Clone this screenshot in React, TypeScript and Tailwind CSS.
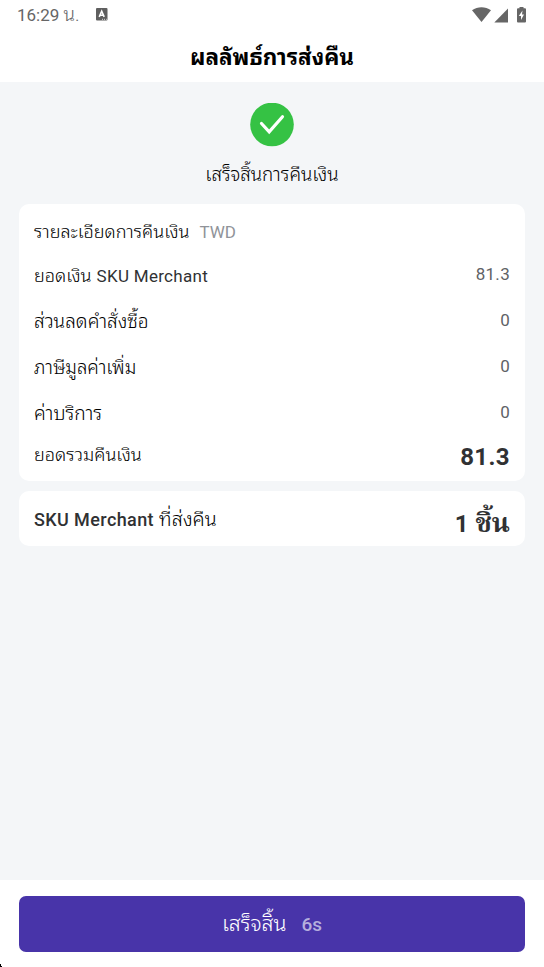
const rows = [
  { label: "ยอดเงิน", suffix: "SKU Merchant", value: "81.3", size: "text-[18.1px]" },
  { label: "ส่วนลดคำสั่งซื้อ", suffix: "", value: "0", size: "text-[19.1px]" },
  { label: "ภาษีมูลค่าเพิ่ม", suffix: "", value: "0", size: "text-[18.7px]" },
  { label: "ค่าบริการ", suffix: "", value: "0", size: "text-[19.1px]" },
];

function StatusBar() {
  return (
    <div className="flex h-8 items-center justify-between px-[17px] text-[#666666]">
      <div className="flex items-center">
        <span className="h-8 text-[17px] leading-[30px]">
          16:29 <span className="text-[19px] font-light">น.</span>
        </span>
        <svg className="mb-[3px] ml-4 h-[13px] w-[12px]" viewBox="0 0 12 13">
          <rect width="11.5" height="12.5" rx="1" fill="#5f5f5f" />
          <path d="M3.2 8.8 5.7 3.2 8.2 8.8M4.2 7.2h3" fill="none" stroke="#fff" strokeWidth="1.6" />
          <path d="M6 11.3h1M8 11.3h1M10 11.3h.8" stroke="#fff" strokeWidth=".8" />
        </svg>
      </div>
      <svg className="mb-[3px] h-4 w-[55px]" viewBox="0 0 55 16" fill="#666">
        <path d="M0 3.3C5.6-.8 13.4-.8 19 3.3L9.5 15Z" />
        <path d="M36 1.500V15.500H22.3Z" />
        <path d="M47.5 0h4V1.3h1.5q1 0 1 1v12.2q0 1-1 1h-7q-1 0-1-1V2.3q0-1 1-1h1.5Z" />
        <path d="M50.5 3.6 46.8 9.1h2.2V13.1L52 7.6H50Z" fill="#fff" />
      </svg>
    </div>
  );
}

export default function App() {
  return (
    <div className="relative flex h-[967px] w-[544px] flex-col bg-[#f4f6f8] font-['Roboto','Noto_Sans_Thai_Looped',monospace] text-[17px] text-[#303133]">
      <header className="h-[82px] bg-white">
        <StatusBar />
        <h1 className="h-[50px] text-center text-[22.5px] font-bold leading-[50px] text-black">ผลลัพธ์การส่งคืน</h1>
      </header>

      <main className="flex-1 px-[19px] pt-[21px]">
        <div className="flex flex-col items-center">
          <svg className="size-11" viewBox="0 0 44 44">
            <circle cx="22" cy="21.5" r="21.8" fill="#35c244" />
            <path d="m11.5 20.5 7.7 8.4L32.5 13.7" fill="none" stroke="#fff" strokeWidth="3.2" strokeLinecap="round" />
          </svg>
          <p className="h-[57px] text-[18.8px] font-light leading-[56px] text-black">เสร็จสิ้นการคืนเงิน</p>
        </div>

        <section className="h-[277px] rounded-[10px] bg-white px-[15px] pt-2">
          <div className="flex h-10 items-baseline leading-10">
            <span className="text-[18.1px] font-light text-black">รายละเอียดการคืนเงิน</span>
            <span className="ml-2.5 text-[#909399]">TWD</span>
          </div>
          {rows.map((row) => (
            <div key={row.label} className="flex h-[46px] items-center justify-between">
              <span className="flex items-baseline gap-[5px] pt-0.5">
                <span className={`${row.size} font-light text-black`}>{row.label}</span>
                {row.suffix && <span className="tracking-[0.3px]">{row.suffix}</span>}
              </span>
              <span className="tracking-[0.3px] text-[#606266]">{row.value}</span>
            </div>
          ))}
          <div className="flex h-[42px] items-center justify-between">
            <span className="pb-1 text-[18.1px] font-light text-black">ยอดรวมคืนเงิน</span>
            <span className="text-2xl font-bold tracking-[0.4px]">81.3</span>
          </div>
        </section>

        <section className="mt-2.5 flex h-[55px] items-center justify-between rounded-[10px] bg-white px-[15px]">
          <span className="flex items-baseline gap-[5px] pt-0.5">
            <span className="text-lg font-medium tracking-[0.4px]">SKU Merchant</span>
            <span className="text-[19.8px] font-light text-black">ที่ส่งคืน</span>
          </span>
          <span className="flex items-baseline gap-[7px] self-start text-2xl font-bold leading-[66px]">
            <span>1</span>
            <span className="font-['Noto_Serif_Thai',monospace] text-[27px]">ชิ้น</span>
          </span>
        </section>
      </main>

      <footer className="h-[87px] bg-white px-[19px] pt-4">
        <button className="flex h-14 w-full items-baseline justify-center rounded-[7px] bg-[#4834a9] text-[19px] leading-[56px] text-white">
          <span className="text-[21.4px] font-light">เสร็จสิ้น</span>
          <span className="ml-[15px] font-medium text-[#b5aedd]">6s</span>
        </button>
      </footer>
      <svg className="absolute bottom-0 left-0 h-[3px] w-[2px]" viewBox="0 0 2 3">
        <path d="M0 0h1v2h1v1H0Z" />
      </svg>
    </div>
  );
}
